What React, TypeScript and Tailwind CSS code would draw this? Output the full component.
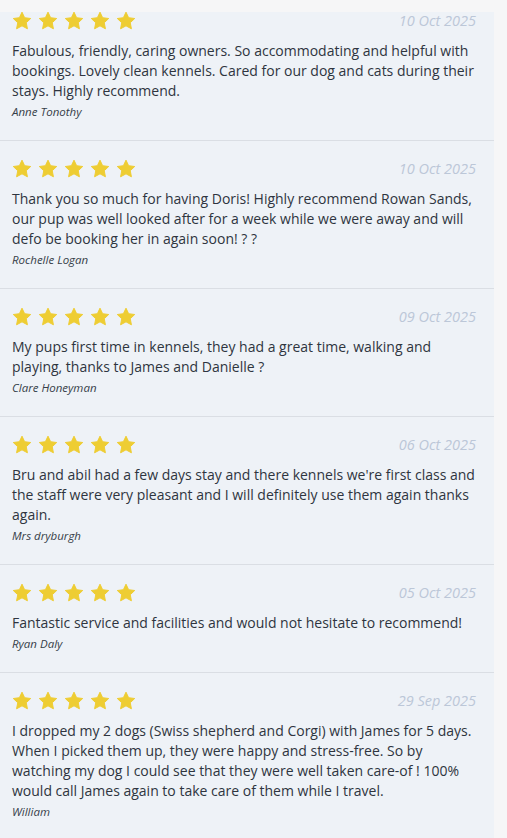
import React from "react";

interface Review {
  id: number;
  date: string;
  text: string;
  name: string;
}

const reviews: Review[] = [
  {
    id: 1,
    date: "10 Oct 2025",
    text: "Fabulous, friendly, caring owners. So accommodating and helpful with bookings. Lovely clean kennels. Cared for our dog and cats during their stays. Highly recommend.",
    name: "Anne Tonothy",
  },
  {
    id: 2,
    date: "10 Oct 2025",
    text: "Thank you so much for having Doris! Highly recommend Rowan Sands, our pup was well looked after for a week while we were away and will defo be booking her in again soon! ? ?",
    name: "Rochelle Logan",
  },
  {
    id: 3,
    date: "09 Oct 2025",
    text: "My pups first time in kennels, they had a great time, walking and playing, thanks to James and Danielle ?",
    name: "Clare Honeyman",
  },
  {
    id: 4,
    date: "06 Oct 2025",
    text: "Bru and abil had a few days stay and there kennels we're first class and the staff were very pleasant and I will definitely use them again thanks again.",
    name: "Mrs dryburgh",
  },
  {
    id: 5,
    date: "05 Oct 2025",
    text: "Fantastic service and facilities and would not hesitate to recommend!",
    name: "Ryan Daly",
  },
  {
    id: 6,
    date: "29 Sep 2025",
    text: "I dropped my 2 dogs (Swiss shepherd and Corgi) with James for 5 days. When I picked them up, they were happy and stress-free. So by watching my dog I could see that they were well taken care-of ! 100% would call James again to take care of them while I travel.",
    name: "William",
  },
];

const Star = () => (
  <svg viewBox="0 0 24 24" className="w-5 h-5" aria-hidden="true">
    <path
      fill="#eecd33"
      stroke="#eecd33"
      strokeWidth="1.2"
      strokeLinejoin="round"
      d="M12 1.4l3.15 6.65 7.3.95-5.35 5.05 1.4 7.3L12 17.8l-6.5 3.55 1.4-7.3L1.55 9l7.3-.95z"
    />
  </svg>
);

function ReviewItem({ review, first }: { review: Review; first: boolean }) {
  return (
    <div
      className={`pl-3 pr-[18px] pb-5 border-b border-[#dadee4] ${first ? "pt-0" : "pt-[18px]"}`}
    >
      <div className="flex items-start justify-between h-5">
        <div className="flex gap-[6px]">
          <Star />
          <Star />
          <Star />
          <Star />
          <Star />
        </div>
        <span className="italic text-[14.5px] leading-5 text-[#bcc7d8]">{review.date}</span>
      </div>
      <p className="mt-[10px] text-[14px] leading-5 text-[#2e3540]">{review.text}</p>
      <p className="mt-[3px] italic text-[11.5px] leading-4 text-[#363e49]">{review.name}</p>
    </div>
  );
}

export default function App() {
  return (
    <div
      className="min-h-screen bg-[#f6f6f7] pt-3"
      style={{ fontFamily: '"Open Sans", "Liberation Sans", sans-serif' }}
    >
      <div className="w-[494px] h-[826px] overflow-hidden bg-[#eef2f7]">
        <div className="-mt-px">
          {reviews.map((r, i) => (
            <ReviewItem key={r.id} review={r} first={i === 0} />
          ))}
        </div>
      </div>
    </div>
  );
}
